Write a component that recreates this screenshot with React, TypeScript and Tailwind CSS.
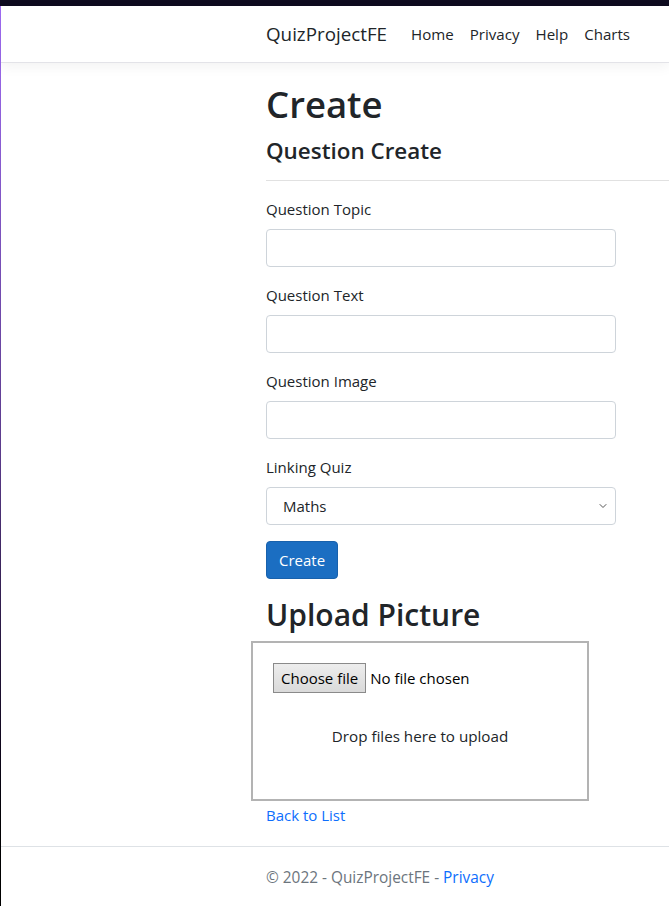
import { ChevronDown } from 'lucide-react';

const fields = ['Question Topic', 'Question Text', 'Question Image'];

export default function App() {
  return (
    <div className="min-h-screen flex flex-col bg-white text-[#212529] font-['Open_Sans','Noto_Sans',sans-serif]">
      {/* window top strip */}
      <div className="h-[6px] bg-[#0e0b1f]" />

      <div className="flex flex-1">
        {/* window edge */}
        <div className="w-px bg-gradient-to-b from-[#a06cf5] via-[#5a3a8a] to-black" />

        <div className="flex-1 flex flex-col">
          {/* Navbar */}
          <header className="h-[57px] bg-white border-b border-[#e3e3e8] shadow-[0_4px_12px_rgba(0,0,0,0.05)] flex items-center pl-[265px]">
            <span className="text-[18.8px] leading-[30px] text-[#212529] mr-4">QuizProjectFE</span>
            <nav className="flex text-[15.1px] text-[#212529]">
              <a className="px-2 py-2">Home</a>
              <a className="px-2 py-2">Privacy</a>
              <a className="px-2 py-2">Help</a>
              <a className="px-2 py-2">Charts</a>
            </nav>
          </header>

          {/* Main */}
          <main className="flex-1 pl-[265px] pb-[19px]">
            <h1 className="mt-[17px] text-[36.5px] leading-[48px] font-semibold">Create</h1>
            <h4 className="mt-2 text-[22.4px] leading-[29px] font-semibold">Question Create</h4>
            <hr className="mt-[15px] border-t border-[#e1e1e1]" />

            <form className="w-[350px] mt-4" onSubmit={e => e.preventDefault()}>
              {fields.map(f => (
                <div key={f} className="mb-4">
                  <label className="block text-[15px] leading-6 mb-2">{f}</label>
                  <input
                    type="text"
                    className="w-full h-[38px] px-3 border border-[#ced4da] rounded bg-white outline-none"
                  />
                </div>
              ))}

              <div className="mb-4">
                <label className="block text-[15px] leading-6 mb-2">Linking Quiz</label>
                <div className="relative">
                  <select className="appearance-none w-full h-[38px] pl-4 pr-9 border border-[#ced4da] rounded bg-white text-[15px] text-[#212529] outline-none">
                    <option>Maths</option>
                  </select>
                  <ChevronDown className="absolute right-[7px] top-1/2 -translate-y-1/2 w-[12px] h-[12px] text-[#555]" strokeWidth={2} />
                </div>
              </div>

              <button
                type="submit"
                className="h-[38px] px-3 bg-[#1b6ec2] border border-[#1861ac] rounded text-white text-[15px]"
              >
                Create
              </button>
            </form>

            <h2 className="mt-[17px] text-[30px] leading-[38px] font-semibold">Upload Picture</h2>

            {/* Dropzone */}
            <div className="mt-[7px] -ml-[15px] w-[338px] h-[160px] border-2 border-[#b3b3b3] p-5 flex flex-col">
              <div className="flex items-center gap-1 text-[15px] text-black">
                <span className="h-[30px] px-[7px] flex items-center border border-[#8a8a8a] bg-gradient-to-b from-[#ededed] to-[#dadada]">
                  Choose file
                </span>
                <span>No file chosen</span>
              </div>
              <div className="mt-[32px] text-center text-[15.2px] text-[#212529]">Drop files here to upload</div>
            </div>

            <a className="inline-block mt-[2px] text-[15px] leading-6 text-[#0d6efd]">Back to List</a>
          </main>

          {/* Footer */}
          <footer className="border-t border-[#dee2e6] h-[60px] leading-[62px] pl-[265px] text-[15.4px] text-[#6c757d]">
            © 2022 - QuizProjectFE - <a className="text-[#0d6efd]">Privacy</a>
          </footer>
        </div>
      </div>
    </div>
  );
}
